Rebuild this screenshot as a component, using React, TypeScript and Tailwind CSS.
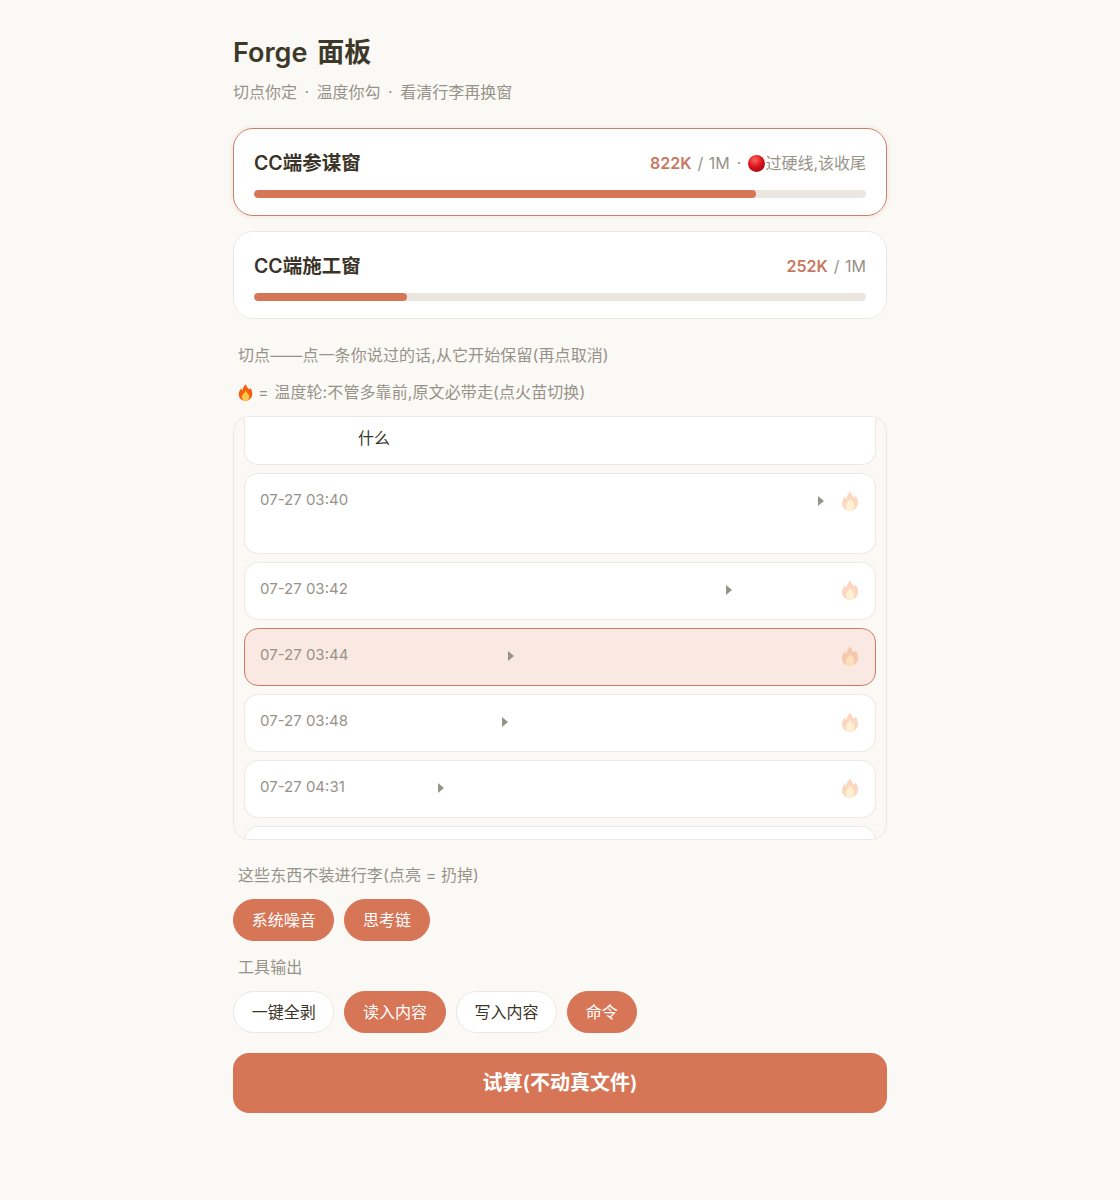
const font = "font-['Inter','Noto_Sans_CJK_SC',sans-serif]";
const label = "ml-[5px] text-[16px] leading-[20px] tracking-[0.1px] text-[#97928a]";

function Flame({ className = "" }: { className?: string }) {
  return (
    <svg viewBox="0 0 16 20" className={className}>
      <path
        d="M8.6 0.4C9 3.2 10.6 4.6 12.2 6.6C13 5.9 13.2 5.2 13.3 4.4C15 6.4 16 8.8 16 11.6C16 16.4 12.6 19.8 8 19.8C3.4 19.8 0 16.6 0 12.2C0 9.2 1.5 7 3 5.4C3.2 6.6 3.6 7.4 4.4 8C4.6 5 6 2.2 8.6 0.4Z"
        fill="#f4600c"
      />
      <path
        d="M8.2 7.6C8.6 9.8 12.4 11.4 12.4 15.2C12.4 17.9 10.4 19.8 8 19.8C5.6 19.8 3.6 18 3.6 15.4C3.6 12.2 7.2 10.6 8.2 7.6Z"
        fill="#fdc94a"
      />
    </svg>
  );
}

function RedDot() {
  return (
    <svg viewBox="0 0 16 16" className="h-[17px] w-[17px] shrink-0">
      <defs>
        <radialGradient id="dot" cx="40%" cy="28%" r="75%">
          <stop offset="0%" stopColor="#f8685c" />
          <stop offset="55%" stopColor="#e0141c" />
          <stop offset="100%" stopColor="#a50a10" />
        </radialGradient>
      </defs>
      <circle cx="8" cy="8" r="8" fill="url(#dot)" />
    </svg>
  );
}

function Meter({
  title,
  used,
  pct,
  hot,
  note,
}: {
  title: string;
  used: string;
  pct: string;
  hot?: boolean;
  note?: string;
}) {
  return (
    <div
      className={`h-[88px] rounded-[20px] border bg-white px-5 pt-[19px] ${
        hot ? "border-[#c9806a] shadow-[0_0_0_3px_rgba(215,118,87,0.05)]" : "border-[#ece8e2]"
      }`}
    >
      <div className="flex h-[32px] items-center justify-between">
        <span className="text-[19.5px] font-semibold text-[#3a3428]">{title}</span>
        <span className="mb-[2px] flex items-center text-[16px] text-[#97928a]">
          <span className="font-semibold text-[#c9785f]">{used}</span>
          <span className="ml-[6px] [word-spacing:1px]">/ 1M</span>
          {note && (
            <>
              <span className="mx-[7px]">·</span>
              <RedDot />
              <span>{note}</span>
            </>
          )}
        </span>
      </div>
      <div className="mt-[10px] h-[8px] overflow-hidden rounded-full bg-[#ebe7e0]">
        <div className={`h-full rounded-full bg-[#d77657] ${pct}`} />
      </div>
    </div>
  );
}

function Row({
  time,
  caret,
  tall,
  picked,
}: {
  time: string;
  caret: string;
  tall?: boolean;
  picked?: boolean;
}) {
  return (
    <div
      className={`flex shrink-0 items-start rounded-[14px] border pl-[15px] pr-[17px] pt-[16px] ${
        tall ? "h-[81px]" : "h-[58px]"
      } ${picked ? "border-[#cf7a62] bg-[#f9e9e2]" : "border-[#ece8e2] bg-white"}`}
    >
      <span className="w-[98px] shrink-0 text-[15px] leading-[20px] text-[#97928a]">{time}</span>
      <span className={`mt-[6px] h-0 w-0 border-y-[5px] border-l-[6px] border-y-transparent border-l-[#97928a] ${caret}`} />
      <Flame className="ml-auto mt-[1px] h-[20px] w-[16px] opacity-25" />
    </div>
  );
}

function Chip({ label, on }: { label: string; on?: boolean }) {
  return (
    <button
      className={`flex h-[42px] items-center rounded-full border px-[17.7px] text-[16px] ${
        on ? "border-[#d77657] bg-[#d77657] text-white" : "border-[#ece8e2] bg-white text-[#3a3428]"
      }`}
    >
      {label}
    </button>
  );
}

export default function App() {
  return (
    <div className={`min-h-[1200px] bg-[#fbf9f5] ${font}`}>
      <div className="mx-auto w-[654px] pt-[33px]">
        <h1 className="text-[27px] font-semibold leading-[40px] text-[#3d3828] [word-spacing:3px]">Forge 面板</h1>
        <p className="mt-[9px] text-[16px] leading-[20px] text-[#97928a] [word-spacing:3px]">切点你定 · 温度你勾 · 看清行李再换窗</p>

        <div className="mt-[26px] flex flex-col gap-[15px]">
          <Meter title="CC端参谋窗" used="822K" pct="w-[82%]" hot note="过硬线,该收尾" />
          <Meter title="CC端施工窗" used="252K" pct="w-[25%]" />
        </div>

        <p className={`${label} mt-[26px]`}>切点——点一条你说过的话,从它开始保留(再点取消)</p>
        <p className={`${label} mt-[17px] flex items-center`}>
          <Flame className="mr-[5px] h-[17px] w-[15px]" />
          <span className="[word-spacing:1px]">= 温度轮:不管多靠前,原文必带走(点火苗切换)</span>
        </p>

        <div className="mt-[14px] h-[424px] overflow-hidden rounded-[16px] border border-[#ece8e2] bg-[#fbf9f5] px-[10px]">
          <div className="-mt-[1px] flex flex-col gap-2">
            <div className="flex h-[49px] shrink-0 items-end rounded-b-[14px] border border-t-0 border-[#ece8e2] bg-white pb-[16px] pl-[113px] text-[16px] leading-[20px] text-[#3a3428]">
              什么
            </div>
            <Row time="07-27 03:40" caret="ml-[460px]" tall />
            <Row time="07-27 03:42" caret="ml-[368px]" />
            <Row time="07-27 03:44" caret="ml-[150px]" picked />
            <Row time="07-27 03:48" caret="ml-[144px]" />
            <Row time="07-27 04:31" caret="ml-[80px]" />
            <div className="h-[58px] shrink-0 rounded-[14px] border border-[#ece8e2] bg-white" />
          </div>
        </div>

        <p className={`${label} mt-[25px]`}>这些东西不装进行李(点亮 = 扔掉)</p>
        <div className="mt-[14px] flex gap-[10px]">
          <Chip label="系统噪音" on />
          <Chip label="思考链" on />
        </div>
        <p className={`${label} mt-[16px]`}>工具输出</p>
        <div className="mt-[14px] flex gap-[10px]">
          <Chip label="一键全剥" />
          <Chip label="读入内容" on />
          <Chip label="写入内容" />
          <Chip label="命令" on />
        </div>
        <button className="mt-[20px] h-[60px] w-full rounded-[16px] bg-[#d77657] text-[20px] font-semibold text-white">
          试算(不动真文件)
        </button>
      </div>
    </div>
  );
}
